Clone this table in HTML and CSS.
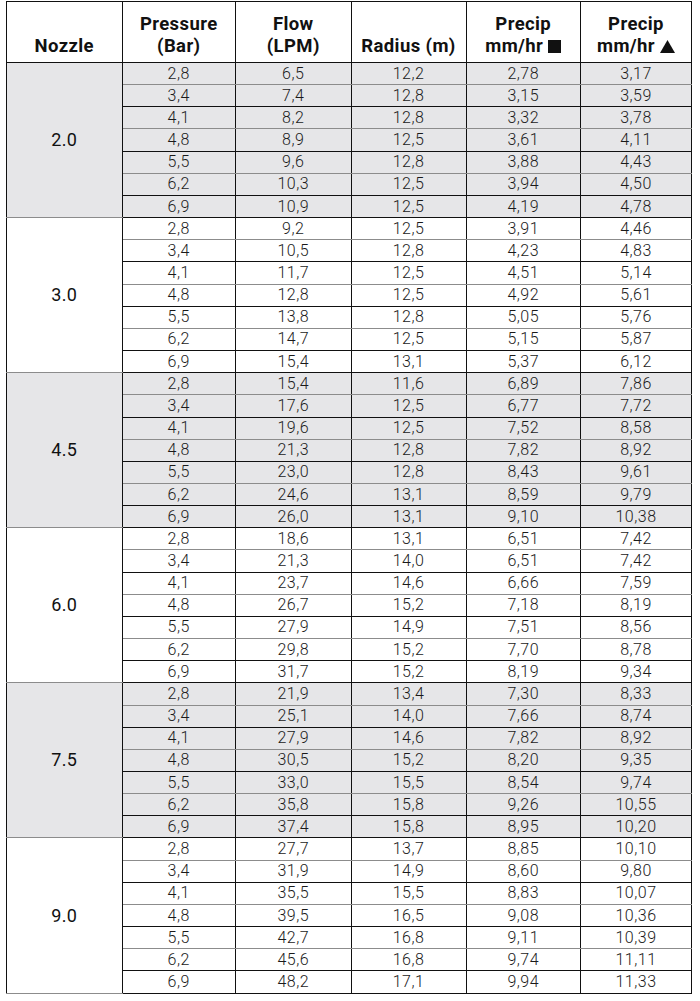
FILE: index.html
```html
<!DOCTYPE html>
<html>
<head>
<meta charset="utf-8">
<link rel="stylesheet" href="styles.css">
</head>
<body>
<table class="chart">
<colgroup>
<col class="c1"><col class="c2"><col class="c3"><col class="c4"><col class="c5"><col class="c6">
</colgroup>
<thead>
<tr class="head">
<th>Nozzle</th>
<th>Pressure<br>(Bar)</th>
<th>Flow<br>(LPM)</th>
<th>Radius (m)</th>
<th>Precip<br>mm/hr <svg class="sym" width="13" height="13" viewBox="0 0 13 13"><rect x="0" y="0" width="13" height="13" fill="#111"/></svg></th>
<th>Precip<br>mm/hr <svg class="sym" width="15" height="13" viewBox="0 0 15 13"><polygon points="7.5,0 15,13 0,13" fill="#111"/></svg></th>
</tr>
</thead>
<tbody class="grp shade">
<tr><td class="noz" rowspan="7">2.0</td><td>2,8</td><td>6,5</td><td>12,2</td><td>2,78</td><td>3,17</td></tr>
<tr><td>3,4</td><td>7,4</td><td>12,8</td><td>3,15</td><td>3,59</td></tr>
<tr><td>4,1</td><td>8,2</td><td>12,8</td><td>3,32</td><td>3,78</td></tr>
<tr><td>4,8</td><td>8,9</td><td>12,5</td><td>3,61</td><td>4,11</td></tr>
<tr><td>5,5</td><td>9,6</td><td>12,8</td><td>3,88</td><td>4,43</td></tr>
<tr><td>6,2</td><td>10,3</td><td>12,5</td><td>3,94</td><td>4,50</td></tr>
<tr><td>6,9</td><td>10,9</td><td>12,5</td><td>4,19</td><td>4,78</td></tr>
</tbody>
<tbody class="grp">
<tr><td class="noz" rowspan="7">3.0</td><td>2,8</td><td>9,2</td><td>12,5</td><td>3,91</td><td>4,46</td></tr>
<tr><td>3,4</td><td>10,5</td><td>12,8</td><td>4,23</td><td>4,83</td></tr>
<tr><td>4,1</td><td>11,7</td><td>12,5</td><td>4,51</td><td>5,14</td></tr>
<tr><td>4,8</td><td>12,8</td><td>12,5</td><td>4,92</td><td>5,61</td></tr>
<tr><td>5,5</td><td>13,8</td><td>12,8</td><td>5,05</td><td>5,76</td></tr>
<tr><td>6,2</td><td>14,7</td><td>12,5</td><td>5,15</td><td>5,87</td></tr>
<tr><td>6,9</td><td>15,4</td><td>13,1</td><td>5,37</td><td>6,12</td></tr>
</tbody>
<tbody class="grp shade">
<tr><td class="noz" rowspan="7">4.5</td><td>2,8</td><td>15,4</td><td>11,6</td><td>6,89</td><td>7,86</td></tr>
<tr><td>3,4</td><td>17,6</td><td>12,5</td><td>6,77</td><td>7,72</td></tr>
<tr><td>4,1</td><td>19,6</td><td>12,5</td><td>7,52</td><td>8,58</td></tr>
<tr><td>4,8</td><td>21,3</td><td>12,8</td><td>7,82</td><td>8,92</td></tr>
<tr><td>5,5</td><td>23,0</td><td>12,8</td><td>8,43</td><td>9,61</td></tr>
<tr><td>6,2</td><td>24,6</td><td>13,1</td><td>8,59</td><td>9,79</td></tr>
<tr><td>6,9</td><td>26,0</td><td>13,1</td><td>9,10</td><td>10,38</td></tr>
</tbody>
<tbody class="grp">
<tr><td class="noz" rowspan="7">6.0</td><td>2,8</td><td>18,6</td><td>13,1</td><td>6,51</td><td>7,42</td></tr>
<tr><td>3,4</td><td>21,3</td><td>14,0</td><td>6,51</td><td>7,42</td></tr>
<tr><td>4,1</td><td>23,7</td><td>14,6</td><td>6,66</td><td>7,59</td></tr>
<tr><td>4,8</td><td>26,7</td><td>15,2</td><td>7,18</td><td>8,19</td></tr>
<tr><td>5,5</td><td>27,9</td><td>14,9</td><td>7,51</td><td>8,56</td></tr>
<tr><td>6,2</td><td>29,8</td><td>15,2</td><td>7,70</td><td>8,78</td></tr>
<tr><td>6,9</td><td>31,7</td><td>15,2</td><td>8,19</td><td>9,34</td></tr>
</tbody>
<tbody class="grp shade">
<tr><td class="noz" rowspan="7">7.5</td><td>2,8</td><td>21,9</td><td>13,4</td><td>7,30</td><td>8,33</td></tr>
<tr><td>3,4</td><td>25,1</td><td>14,0</td><td>7,66</td><td>8,74</td></tr>
<tr><td>4,1</td><td>27,9</td><td>14,6</td><td>7,82</td><td>8,92</td></tr>
<tr><td>4,8</td><td>30,5</td><td>15,2</td><td>8,20</td><td>9,35</td></tr>
<tr><td>5,5</td><td>33,0</td><td>15,5</td><td>8,54</td><td>9,74</td></tr>
<tr><td>6,2</td><td>35,8</td><td>15,8</td><td>9,26</td><td>10,55</td></tr>
<tr><td>6,9</td><td>37,4</td><td>15,8</td><td>8,95</td><td>10,20</td></tr>
</tbody>
<tbody class="grp">
<tr><td class="noz" rowspan="7">9.0</td><td>2,8</td><td>27,7</td><td>13,7</td><td>8,85</td><td>10,10</td></tr>
<tr><td>3,4</td><td>31,9</td><td>14,9</td><td>8,60</td><td>9,80</td></tr>
<tr><td>4,1</td><td>35,5</td><td>15,5</td><td>8,83</td><td>10,07</td></tr>
<tr><td>4,8</td><td>39,5</td><td>16,5</td><td>9,08</td><td>10,36</td></tr>
<tr><td>5,5</td><td>42,7</td><td>16,8</td><td>9,11</td><td>10,39</td></tr>
<tr><td>6,2</td><td>45,6</td><td>16,8</td><td>9,74</td><td>11,11</td></tr>
<tr><td>6,9</td><td>48,2</td><td>17,1</td><td>9,94</td><td>11,33</td></tr>
</tbody>
</table>
</body>
</html>
```
FILE: styles.css
```css
html, body {
  margin: 0;
  padding: 0;
  background: #ffffff;
}
body {
  padding: 1px 0 0 6px;
  font-family: Roboto, "Liberation Sans", sans-serif;
  color: #1a1a1a;
}
.chart {
  border-collapse: collapse;
  table-layout: fixed;
  width: 685px;
  border: 1px solid #111;
}
.c1 { width: 115.5px; }
.c2 { width: 113.5px; }
.c3 { width: 115.5px; }
.c4 { width: 115px; }
.c5 { width: 114.5px; }
.c6 { width: 111px; }
.head th {
  height: 61px;
  box-sizing: border-box;
  padding: 0 0 5px 0;
  vertical-align: bottom;
  text-align: center;
  font-weight: 700;
  font-size: 18.5px;
  letter-spacing: 0.4px;
  line-height: 22px;
  color: #111;
  border: 1px solid #111;
}
.sym {
  vertical-align: -1px;
}
.grp tr {
  height: 22.17px;
}
.grp td {
  padding: 0;
  text-align: center;
  vertical-align: middle;
  font-weight: 300;
  font-size: 16px;
  letter-spacing: 0.5px;
  line-height: 20px;
  color: #1a1a1a;
  border-left: 1px solid #111;
  border-right: 1px solid #111;
  border-bottom: 1px solid #111;
}
.grp tr:nth-child(odd) td {
  border-bottom-color: #8c8c8c;
}
.grp tr:last-child td,
.grp td.noz {
  border-bottom: 1px solid #111;
}
.grp td.noz {
  font-weight: 400;
  font-size: 18px;
  letter-spacing: 0.3px;
  color: #111;
}
.shade td {
  background: #e6e6e8;
}
```
